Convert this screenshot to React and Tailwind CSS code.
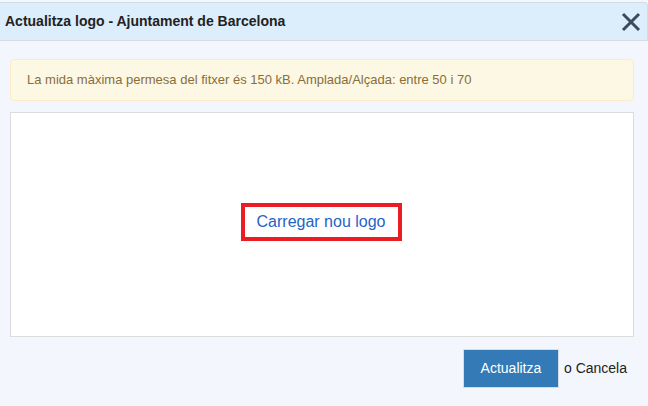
export default function App() {
  return (
    <div className="w-[648px] h-[406px] bg-[#f3f7fd] font-['Liberation_Sans',Arial,sans-serif] overflow-hidden">
      {/* Header */}
      <div className="mt-[2px] h-[39px] border border-l-0 border-[#d3dbe4] rounded-tr-[4px] bg-[#dcedfc] flex items-center justify-between pl-[5px] pr-[5px]">
        <h1 className="text-[14px] font-bold text-[#222]">Actualitza logo - Ajuntament de Barcelona</h1>
        <button className="w-[22px] h-[22px] flex items-center justify-center text-[#3c4b5b]">
          <svg width="20" height="20" viewBox="0 0 20 20" fill="none" stroke="currentColor" strokeWidth="3" strokeLinecap="butt">
            <path d="M2 2L18 18M18 2L2 18" />
          </svg>
        </button>
      </div>

      <div className="px-[10px] pt-[18px] pr-[14px]">
        {/* Alert */}
        <div className="h-[42px] rounded-[4px] border border-[#faebcc] bg-[#fcf8e3] flex items-center pl-[16px] text-[13px] text-[#8a6d3b]">
          La mida màxima permesa del fitxer és 150 kB. Amplada/Alçada: entre 50 i 70
        </div>

        {/* Upload area */}
        <div className="mt-[11px] h-[225px] border border-[#dcdcdc] bg-white flex items-center justify-center">
          <div className="mr-[2px] mb-[6px] w-[161px] h-[38px] border-[4px] border-[#ec1c24] flex items-center justify-center">
            <a href="#" className="text-[16px] text-[#1f63c6]">Carregar nou logo</a>
          </div>
        </div>

        {/* Footer */}
        <div className="mt-[12px] flex items-center justify-end pr-[7px]">
          <button className="w-[96px] h-[39px] bg-[#337ab7] border border-[#d6dde4] text-white text-[14px]">
            Actualitza
          </button>
          <span className="ml-[5px] text-[14px] text-[#222]">o Cancela</span>
        </div>
      </div>
    </div>
  )
}
